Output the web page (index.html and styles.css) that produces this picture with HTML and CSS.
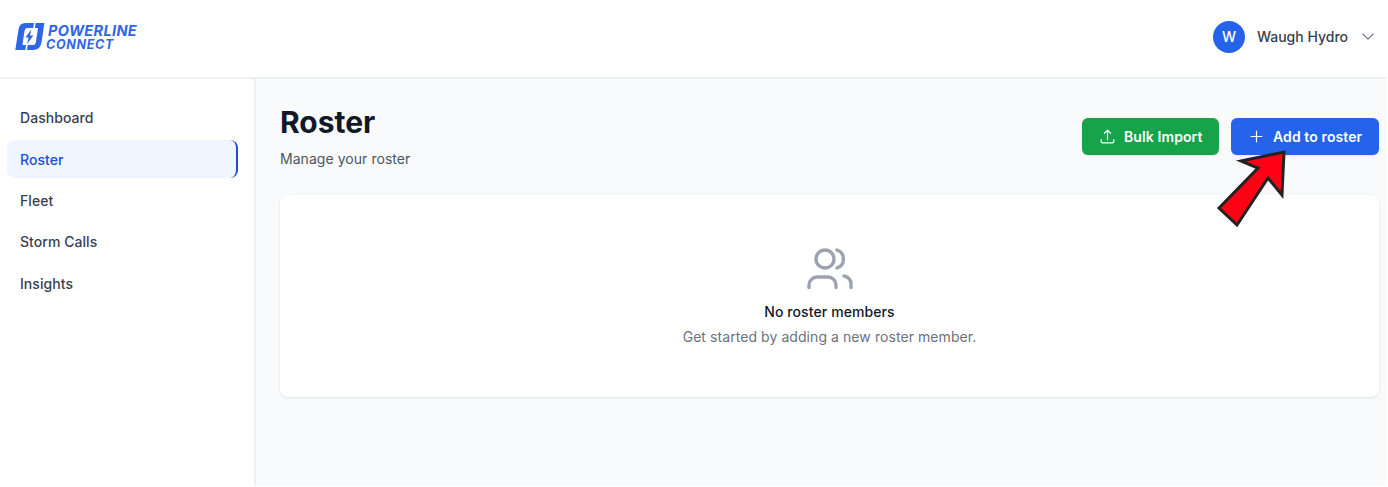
FILE: index.html
```html
<!DOCTYPE html>
<html lang="en">
<head>
<meta charset="utf-8">
<title>Roster</title>
<link rel="stylesheet" href="styles.css">
</head>
<body>
<div class="app">
  <header class="topbar">
    <div class="brand">
      <svg class="brand-mark" viewBox="0 0 30 29" width="30" height="29">
        <path d="M0.3 28 L3.6 7 Q4.6 1 10.5 1 L19 1 L18.2 6 L12.5 6 Q10 6 9.6 8.5 L7.4 23 L11 23 L10.3 28 Z" fill="#2f66e8"/>
        <path d="M20.6 1 L29.4 1 L26.6 20 Q25.6 27.6 18.5 28 L12 28 L12.7 23 L18.5 23 Q20.4 23 20.8 20.6 L23 6 L19.9 6 Z" fill="#2f66e8"/>
        <path d="M16.4 7.5 L10.4 15.6 L13.6 15.6 L12 22 L18.4 13.6 L15 13.6 Z" fill="#2f66e8"/>
      </svg>
      <div class="brand-text">
        <span class="brand-top">POWERLINE</span>
        <span class="brand-bottom">CONNECT</span>
      </div>
    </div>
    <div class="user">
      <span class="avatar">W</span>
      <span class="user-name">Waugh Hydro</span>
      <svg class="chev" viewBox="0 0 12 8" width="12" height="8" fill="none"><path d="M1 1.2 L6 6.2 L11 1.2" stroke="#6b7280" stroke-width="1.2" stroke-linecap="round" stroke-linejoin="round"/></svg>
    </div>
  </header>
  <div class="body">
    <nav class="sidebar">
      <a class="nav-item">Dashboard</a>
      <a class="nav-item active">Roster</a>
      <a class="nav-item">Fleet</a>
      <a class="nav-item">Storm Calls</a>
      <a class="nav-item">Insights</a>
    </nav>
    <main class="main">
      <div class="page-head">
        <div>
          <h1 class="title">Roster</h1>
          <p class="subtitle">Manage your roster</p>
        </div>
        <div class="actions">
          <button class="btn btn-green">
            <svg viewBox="0 0 24 24" width="17" height="17" fill="none" stroke="#fff" stroke-width="1.7" stroke-linecap="round" stroke-linejoin="round"><path d="M3 16.5v2.25A2.25 2.25 0 0 0 5.25 21h13.5A2.25 2.25 0 0 0 21 18.75V16.5m-13.5-9L12 3m0 0 4.5 4.5M12 3v13.5"/></svg>
            Bulk Import
          </button>
          <button class="btn btn-blue">
            <svg viewBox="0 0 24 24" width="17" height="17" fill="none" stroke="#fff" stroke-width="1.7" stroke-linecap="round" stroke-linejoin="round"><path d="M12 4.5v15m7.5-7.5h-15"/></svg>
            Add to roster
          </button>
          <svg class="arrow" viewBox="0 0 70 78" width="70" height="78"><path d="M67 2 L65 45 L51 28 L20 75 L2 58 L41 18 L24 11 Z" fill="#ff0015" stroke="#222" stroke-width="3" stroke-miterlimit="10"/></svg>
        </div>
      </div>
      <section class="card">
        <svg class="empty-icon" viewBox="0 0 48 48" width="48" height="48" fill="none" stroke="#9ca3af" stroke-width="3.4" stroke-linecap="round" stroke-linejoin="round"><circle cx="19" cy="14" r="9"/><path d="M31 5 A9.5 9.5 0 0 1 31 23"/><path d="M3 42.5 V40 A8 8 0 0 1 11 32 H22 A8 8 0 0 1 30 40 V42.5"/><path d="M38 31 A8 8 0 0 1 45 39 V42.5"/></svg>
        <h2 class="empty-title">No roster members</h2>
        <p class="empty-text">Get started by adding a new roster member.</p>
      </section>
    </main>
  </div>
</div>
</body>
</html>
```
FILE: styles.css
```css
* { box-sizing: border-box; }
html, body { margin: 0; height: 100%; background: #fff; }
body { font-family: Inter, "Liberation Sans", sans-serif; overflow: hidden; }
.app { width: 1386px; height: 486px; display: flex; flex-direction: column; }
.topbar { height: 79px; flex: none; display: flex; align-items: center; justify-content: space-between; padding: 0 12px 4px 15px; background: #fff; border-bottom: 2px solid #eff0f2; }
.brand { display: flex; align-items: center; gap: 1px; }
.brand-mark { display: block; }
.brand-text { display: flex; flex-direction: column; font-weight: 700; font-style: italic; color: #2f66e8; }
.brand-top { font-size: 14.5px; line-height: 15px; letter-spacing: 0.35px; margin-left: 2px; }
.brand-bottom { font-size: 12.5px; line-height: 13px; letter-spacing: 0.7px; }
.user { display: flex; align-items: center; }
.avatar { width: 32px; height: 32px; border-radius: 50%; background: #2563eb; color: #fff; font-size: 14px; font-weight: 500; display: flex; align-items: center; justify-content: center; }
.user-name { margin-left: 12px; font-size: 14px; font-weight: 500; color: #374151; }
.chev { margin-left: 14px; }
.body { flex: 1; display: flex; min-height: 0; }
.sidebar { width: 256px; flex: none; background: #fff; border-right: 2px solid #eff0f2; padding: 20.2px 16px 0 7px; display: flex; flex-direction: column; gap: 4px; }
.nav-item { height: 37.3px; display: flex; align-items: center; padding-left: 13px; font-size: 14px; font-weight: 500; letter-spacing: 0.05px; color: #374151; border-radius: 8px; }
.nav-item.active { background: #eff6ff; color: #1d4ed8; border-right: 2px solid #1d4ed8; }
.main { flex: 1; background: #f9fafb; padding: 25px 7px 0 24px; }
.page-head { display: flex; justify-content: space-between; align-items: center; }
.title { margin: 0; font-size: 30px; line-height: 36px; font-weight: 700; color: #111827; }
.subtitle { margin: 9.4px 0 0; font-size: 14px; line-height: 20px; letter-spacing: 0.05px; color: #4b5563; }
.actions { position: relative; display: flex; gap: 12px; margin-top: -1px; }
.btn { height: 37px; border: 0; border-radius: 6px; display: flex; align-items: center; gap: 8px; padding: 0 16px 0 17px; font: 600 14px Inter, "Liberation Sans", sans-serif; letter-spacing: 0.1px; color: #fff; box-shadow: 0 1px 2px rgba(0,0,0,.08); }
.btn-green { background: #16a34a; width: 137px; }
.btn-blue { background: #2563eb; width: 148px; }
.arrow { position: absolute; left: 135px; top: 32px; }
.card { margin-top: 25.6px; height: 202px; background: #fff; border-radius: 8px; box-shadow: 0 1px 3px rgba(0,0,0,.1); display: flex; flex-direction: column; align-items: center; padding-top: 50px; }
.empty-icon { display: block; }
.empty-title { margin: 9px 0 0; font-size: 14px; line-height: 20px; font-weight: 500; letter-spacing: 0.1px; color: #111827; }
.empty-text { margin: 5px 0 0; font-size: 14px; line-height: 20px; letter-spacing: 0.07px; color: #6b7280; }
```
